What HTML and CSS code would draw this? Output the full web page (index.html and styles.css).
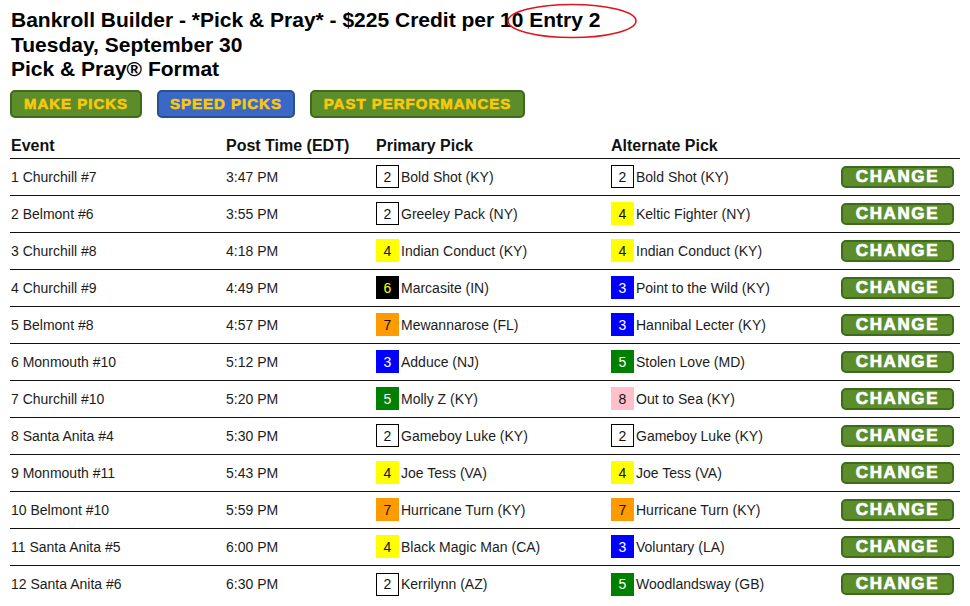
FILE: index.html
```html
<!DOCTYPE html>
<html>
<head>
<meta charset="utf-8">
<link rel="stylesheet" href="styles.css">
</head>
<body>
<div class="page">
  <div class="title">
    <div>Bankroll Builder - *Pick &amp; Pray* - $225 Credit per 10 Entry 2</div>
    <div>Tuesday, September 30</div>
    <div>Pick &amp; Pray® Format</div>
    <svg class="circle" width="134" height="38" viewBox="0 0 134 38"><ellipse cx="67" cy="19" rx="64" ry="16.5" fill="none" stroke="#e0141c" stroke-width="1.6"/></svg>
  </div>
  <div class="actions">
    <span class="btn green">MAKE PICKS</span>
    <span class="btn blue">SPEED PICKS</span>
    <span class="btn green">PAST PERFORMANCES</span>
  </div>
  <div class="table">
    <div class="row head"><div class="c1">Event</div><div>Post Time (EDT)</div><div>Primary Pick</div><div>Alternate Pick</div><div></div></div>
    <div class="row"><div class="c1">1 Churchill #7</div><div>3:47 PM</div><div class="pick"><span class="b w">2</span>Bold Shot (KY)</div><div class="pick"><span class="b w">2</span>Bold Shot (KY)</div><div><span class="chg">CHANGE</span></div></div>
    <div class="row"><div class="c1">2 Belmont #6</div><div>3:55 PM</div><div class="pick"><span class="b w">2</span>Greeley Pack (NY)</div><div class="pick"><span class="b y">4</span>Keltic Fighter (NY)</div><div><span class="chg">CHANGE</span></div></div>
    <div class="row"><div class="c1">3 Churchill #8</div><div>4:18 PM</div><div class="pick"><span class="b y">4</span>Indian Conduct (KY)</div><div class="pick"><span class="b y">4</span>Indian Conduct (KY)</div><div><span class="chg">CHANGE</span></div></div>
    <div class="row"><div class="c1">4 Churchill #9</div><div>4:49 PM</div><div class="pick"><span class="b k">6</span>Marcasite (IN)</div><div class="pick"><span class="b u">3</span>Point to the Wild (KY)</div><div><span class="chg">CHANGE</span></div></div>
    <div class="row"><div class="c1">5 Belmont #8</div><div>4:57 PM</div><div class="pick"><span class="b o">7</span>Mewannarose (FL)</div><div class="pick"><span class="b u">3</span>Hannibal Lecter (KY)</div><div><span class="chg">CHANGE</span></div></div>
    <div class="row"><div class="c1">6 Monmouth #10</div><div>5:12 PM</div><div class="pick"><span class="b u">3</span>Adduce (NJ)</div><div class="pick"><span class="b g">5</span>Stolen Love (MD)</div><div><span class="chg">CHANGE</span></div></div>
    <div class="row"><div class="c1">7 Churchill #10</div><div>5:20 PM</div><div class="pick"><span class="b g">5</span>Molly Z (KY)</div><div class="pick"><span class="b p">8</span>Out to Sea (KY)</div><div><span class="chg">CHANGE</span></div></div>
    <div class="row"><div class="c1">8 Santa Anita #4</div><div>5:30 PM</div><div class="pick"><span class="b w">2</span>Gameboy Luke (KY)</div><div class="pick"><span class="b w">2</span>Gameboy Luke (KY)</div><div><span class="chg">CHANGE</span></div></div>
    <div class="row"><div class="c1">9 Monmouth #11</div><div>5:43 PM</div><div class="pick"><span class="b y">4</span>Joe Tess (VA)</div><div class="pick"><span class="b y">4</span>Joe Tess (VA)</div><div><span class="chg">CHANGE</span></div></div>
    <div class="row"><div class="c1">10 Belmont #10</div><div>5:59 PM</div><div class="pick"><span class="b o">7</span>Hurricane Turn (KY)</div><div class="pick"><span class="b o">7</span>Hurricane Turn (KY)</div><div><span class="chg">CHANGE</span></div></div>
    <div class="row"><div class="c1">11 Santa Anita #5</div><div>6:00 PM</div><div class="pick"><span class="b y">4</span>Black Magic Man (CA)</div><div class="pick"><span class="b u">3</span>Voluntary (LA)</div><div><span class="chg">CHANGE</span></div></div>
    <div class="row last"><div class="c1">12 Santa Anita #6</div><div>6:30 PM</div><div class="pick"><span class="b w">2</span>Kerrilynn (AZ)</div><div class="pick"><span class="b g">5</span>Woodlandsway (GB)</div><div><span class="chg">CHANGE</span></div></div>
  </div>
</div>
</body>
</html>
```
FILE: styles.css
```css
html, body { margin: 0; padding: 0; background: #fff; }
body { font-family: "Liberation Sans", Arial, sans-serif; color: #111; overflow: hidden; }
.page { padding: 8px 10px 0 10px; }
.title { position: relative; font-size: 21px; font-weight: bold; line-height: 24.5px; padding-left: 1px; color: #000; }
.circle { position: absolute; left: 495px; top: -6px; }
.actions { display: flex; gap: 15px; margin-top: 8px; }
.btn { display: inline-flex; align-items: center; justify-content: center; box-sizing: border-box; height: 28px; padding: 0; white-space: nowrap; border-radius: 5px; border: 2px solid #3d6a1b; color: #f8c90a; font-weight: bold; font-size: 15px; letter-spacing: 1px; -webkit-text-stroke: 0.6px #f8c90a; }
.btn.green { background: #5c8d2a; }
.btn.blue { background: #3a68c6; border-color: #2b4f8e; }
.actions .btn:nth-child(1) { width: 132px; }
.actions .btn:nth-child(2) { width: 138px; }
.actions .btn:nth-child(3) { width: 215px; }
.table { margin-top: 12px; width: 950px; }
.row { display: grid; grid-template-columns: 216px 150px 235px 229px 120px; align-items: center; height: 37px; box-sizing: border-box; border-bottom: 1px solid #111; font-size: 14px; color: #1c1c1c; }
.row.last { border-bottom: none; }
.row.head { height: 29px; font-size: 16px; font-weight: bold; color: #111; align-items: end; padding-bottom: 3px; }
.c1 { padding-left: 1px; }
.pick { display: flex; align-items: center; }
.b { display: inline-flex; align-items: center; justify-content: center; width: 23px; height: 23px; box-sizing: border-box; margin-right: 2px; font-size: 14px; }
.b.w { border: 1px solid #000; background: #fff; color: #111; }
.b.y { background: #ffff00; color: #111; }
.b.k { background: #000; color: #ffff00; }
.b.o { background: #ff9a00; color: #111; }
.b.u { background: #0000ff; color: #fff; }
.b.g { background: #008000; color: #fff; }
.b.p { background: #ffc0cb; color: #111; }
.chg { display: flex; align-items: center; justify-content: center; box-sizing: border-box; width: 113px; height: 22px; margin-left: 1px; background: #5c8d2a; border: 2px solid #3d6a1b; border-radius: 5px; color: #fff; font-weight: bold; font-size: 17px; letter-spacing: 1.6px; -webkit-text-stroke: 0.7px #fff; }
```
